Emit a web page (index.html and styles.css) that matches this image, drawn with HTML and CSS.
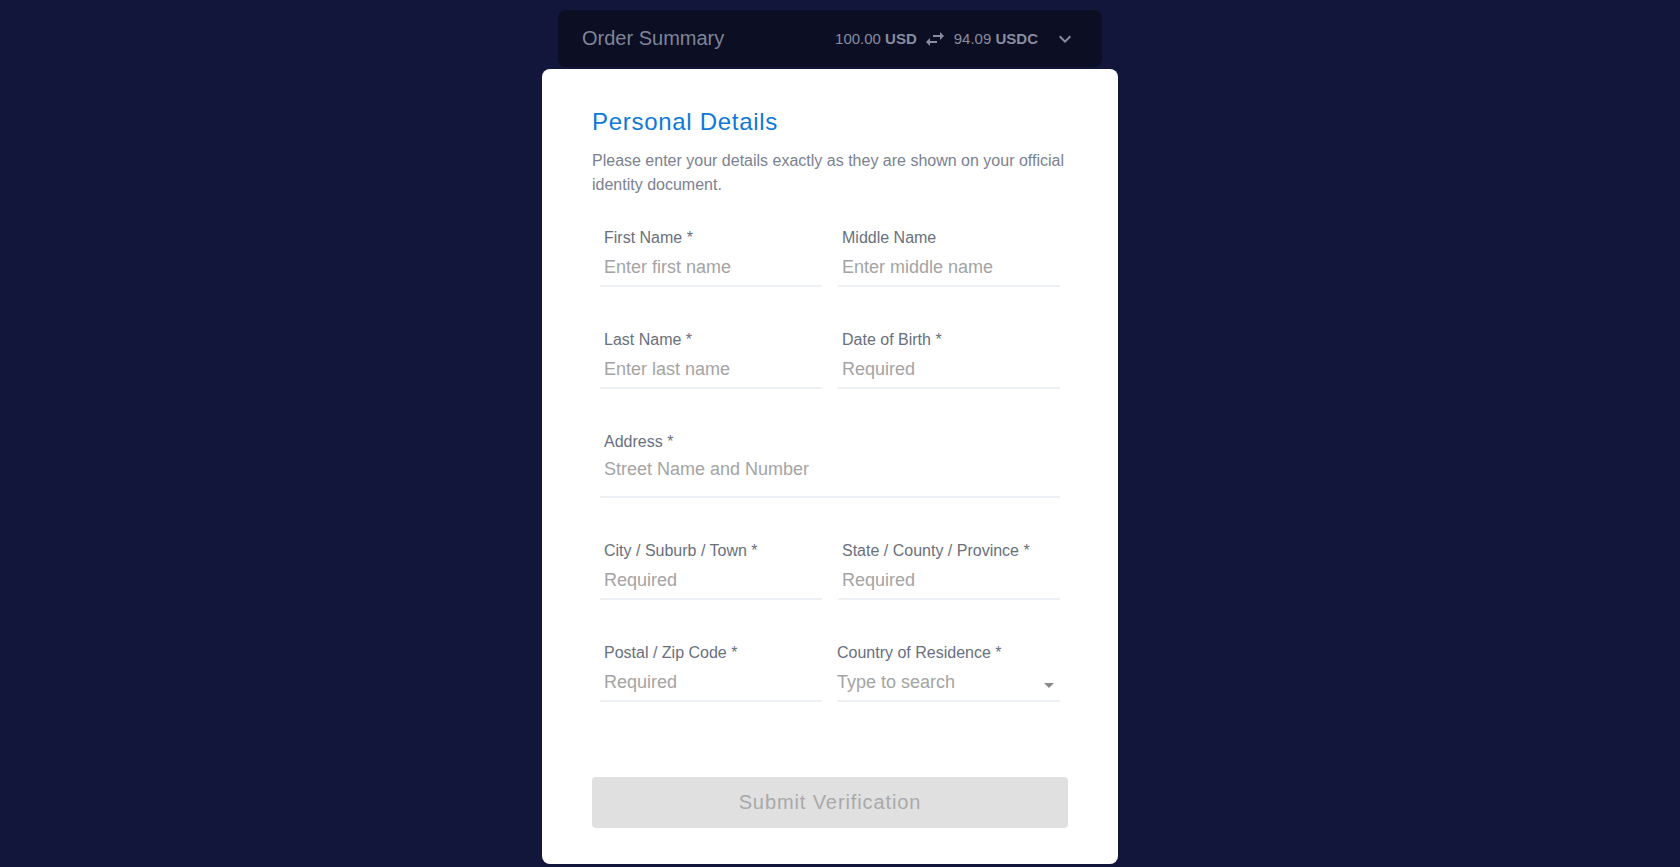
FILE: index.html
```html
<!DOCTYPE html>
<html lang="en">
<head>
<meta charset="utf-8">
<title>Personal Details</title>
<link rel="stylesheet" href="styles.css">
</head>
<body>
<div class="page">
  <div class="summary">
    <div class="summary-title">Order Summary</div>
    <div class="amounts">
      <span class="amt">100.00 <b>USD</b></span>
      <svg class="swap" viewBox="0 0 24 24" width="24" height="24"><path d="M6.99 11L3 15l3.99 4v-3H14v-2H6.99v-3zM21 9l-3.99-4v3H10v2h7.01v3L21 9z"/></svg>
      <span class="amt">94.09 <b>USDC</b></span>
      <svg class="chev" viewBox="0 0 24 24" width="24" height="24"><path d="M16.59 8.59L12 13.17 7.41 8.59 6 10l6 6 6-6z"/></svg>
    </div>
  </div>
  <div class="card">
    <h1 class="title">Personal Details</h1>
    <p class="desc">Please enter your details exactly as they are shown on your official identity document.</p>
    <form class="form">
      <div class="field">
        <label>First Name *</label>
        <input type="text" placeholder="Enter first name">
      </div>
      <div class="field">
        <label>Middle Name</label>
        <input type="text" placeholder="Enter middle name">
      </div>
      <div class="field">
        <label>Last Name *</label>
        <input type="text" placeholder="Enter last name">
      </div>
      <div class="field">
        <label>Date of Birth *</label>
        <input type="text" placeholder="Required">
      </div>
      <div class="field wide">
        <label>Address *</label>
        <input type="text" placeholder="Street Name and Number">
      </div>
      <div class="field">
        <label>City / Suburb / Town *</label>
        <input type="text" placeholder="Required">
      </div>
      <div class="field">
        <label>State / County / Province *</label>
        <input type="text" placeholder="Required">
      </div>
      <div class="field">
        <label>Postal / Zip Code *</label>
        <input type="text" placeholder="Required">
      </div>
      <div class="field select">
        <label>Country of Residence *</label>
        <input type="text" placeholder="Type to search">
        <svg class="drop" viewBox="0 0 24 24" width="24" height="24"><path d="M7 10l5 5 5-5z"/></svg>
      </div>
    </form>
    <button class="submit" type="button" disabled>Submit Verification</button>
  </div>
</div>
</body>
</html>
```
FILE: styles.css
```css
html, body {
  margin: 0;
  padding: 0;
}
body {
  background: #12163a;
  font-family: "Liberation Sans", Arial, sans-serif;
  height: 867px;
  overflow: hidden;
}
.page {
  width: 576px;
  margin-left: calc(50% - 298px);
  padding-top: 10px;
}
.summary {
  margin: 0 16px;
  height: 57px;
  box-sizing: border-box;
  background: #0c0e24;
  border-radius: 8px;
  display: flex;
  align-items: center;
  padding: 0 25px 0 24px;
}
.summary-title {
  flex: 1;
  font-size: 20px;
  color: #7f8497;
}
.amounts {
  display: flex;
  align-items: center;
  font-size: 15px;
  color: #888c9e;
}
.amt b {
  font-weight: bold;
}
.amt:first-child {
  margin-left: 2px;
}
.swap {
  fill: #888c9e;
  margin: 0 7px 0 6px;
}
.chev {
  fill: #888c9e;
  margin-left: 15px;
}
.card {
  margin-top: 2px;
  background: #ffffff;
  border-radius: 8px;
  padding: 37px 50px 36px;
}
.title {
  margin: 0;
  font-size: 24px;
  line-height: 32px;
  font-weight: normal;
  letter-spacing: 0.7px;
  color: #0f79d6;
}
.desc {
  margin: 11px 0 0;
  font-size: 16px;
  line-height: 24px;
  color: #7b8291;
}
.form {
  margin: 30px 8px 0;
  display: grid;
  grid-template-columns: 1fr 1fr;
  column-gap: 16px;
  row-gap: 42px;
}
.field {
  position: relative;
  min-width: 0;
}
.field label {
  display: block;
  font-size: 16px;
  line-height: 20px;
  padding-top: 1px;
  color: #69707d;
  padding-left: 4px;
}
.field input {
  display: block;
  width: 100%;
  box-sizing: border-box;
  height: 39px;
  border: 0;
  border-bottom: 2px solid #edf1f6;
  padding: 8px 4px 7px;
  margin: 0;
  font-family: inherit;
  font-size: 18px;
  line-height: 22px;
  color: #333;
  background: transparent;
  outline: none;
}
.field input::placeholder {
  color: #a4a4a4;
  opacity: 1;
}
.wide {
  grid-column: span 2;
}
.wide input {
  height: 46px;
  padding: 6px 4px 16px;
}
.select {
  margin-left: -1px;
}
.select label {
  padding-left: 0;
}
.select input {
  padding-left: 0;
  padding-right: 26px;
}
.drop {
  position: absolute;
  right: -1px;
  bottom: 5px;
  fill: #8a8a8a;
}
.submit {
  display: block;
  margin-top: 75px;
  width: 100%;
  height: 51px;
  border: 0;
  border-radius: 4px;
  background: #e0e0e0;
  color: #a9a9a9;
  font-family: inherit;
  font-size: 20px;
  letter-spacing: 0.9px;
  padding: 0;
}
```
